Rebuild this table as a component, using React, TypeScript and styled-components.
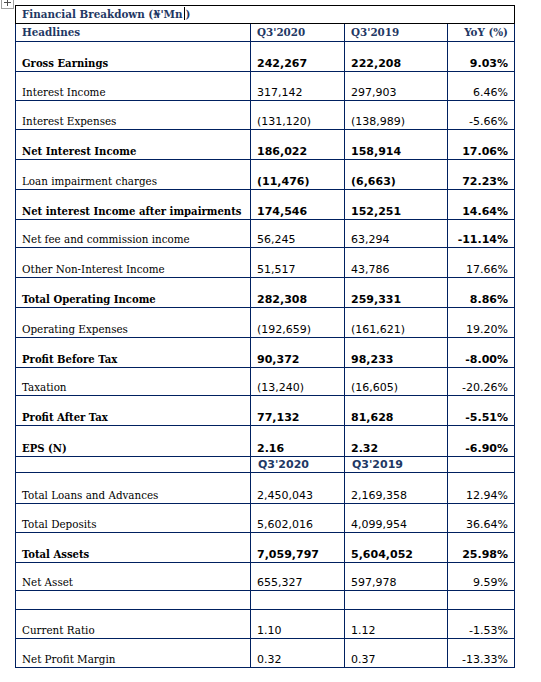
import styled, { createGlobalStyle } from 'styled-components';

const GlobalStyle = createGlobalStyle`
    html, body {
        margin: 0;
        padding: 0;
        background: #ffffff;
    }
    body {
        padding: 5px 0 0 15px;
    }
`;

const NAVY = '#002060';
const INK = '#1f3864';
const SERIF = `"DejaVu Serif Condensed", "DejaVu Serif", serif`;
const SANS = `"DejaVu Sans", "Liberation Sans", sans-serif`;

type Row = {
    label: string;
    q20: string;
    q19: string;
    yoy: string;
    lb?: boolean;
    vb?: boolean;
    yb?: boolean;
    h: number;
};

const topRows: Row[] = [
    { label: 'Gross Earnings', q20: '242,267', q19: '222,208', yoy: '9.03%', lb: true, vb: true, yb: true, h: 30 },
    { label: 'Interest Income', q20: '317,142', q19: '297,903', yoy: '6.46%', h: 29 },
    { label: 'Interest Expenses', q20: '(131,120)', q19: '(138,989)', yoy: '-5.66%', h: 29 },
    { label: 'Net Interest Income', q20: '186,022', q19: '158,914', yoy: '17.06%', lb: true, vb: true, yb: true, h: 30 },
    { label: 'Loan impairment charges', q20: '(11,476)', q19: '(6,663)', yoy: '72.23%', vb: true, yb: true, h: 30 },
    { label: 'Net interest Income after impairments', q20: '174,546', q19: '152,251', yoy: '14.64%', lb: true, vb: true, yb: true, h: 30 },
    { label: 'Net fee and commission income', q20: '56,245', q19: '63,294', yoy: '-11.14%', yb: true, h: 28 },
    { label: 'Other Non-Interest Income', q20: '51,517', q19: '43,786', yoy: '17.66%', h: 30 },
    { label: 'Total Operating Income', q20: '282,308', q19: '259,331', yoy: '8.86%', lb: true, vb: true, yb: true, h: 30 },
    { label: 'Operating Expenses', q20: '(192,659)', q19: '(161,621)', yoy: '19.20%', h: 30 },
    { label: 'Profit Before Tax', q20: '90,372', q19: '98,233', yoy: '-8.00%', lb: true, vb: true, yb: true, h: 30 },
    { label: 'Taxation', q20: '(13,240)', q19: '(16,605)', yoy: '-20.26%', h: 28 },
    { label: 'Profit After Tax', q20: '77,132', q19: '81,628', yoy: '-5.51%', lb: true, vb: true, yb: true, h: 30 },
    { label: 'EPS (N)', q20: '2.16', q19: '2.32', yoy: '-6.90%', lb: true, vb: true, yb: true, h: 31 },
];

const bottomRows: Row[] = [
    { label: 'Total Loans and Advances', q20: '2,450,043', q19: '2,169,358', yoy: '12.94%', h: 31 },
    { label: 'Total Deposits', q20: '5,602,016', q19: '4,099,954', yoy: '36.64%', h: 29 },
    { label: 'Total Assets', q20: '7,059,797', q19: '5,604,052', yoy: '25.98%', lb: true, vb: true, yb: true, h: 30 },
    { label: 'Net Asset', q20: '655,327', q19: '597,978', yoy: '9.59%', h: 28 },
];

const ratioRows: Row[] = [
    { label: 'Current Ratio', q20: '1.10', q19: '1.12', yoy: '-1.53%', h: 29 },
    { label: 'Net Profit Margin', q20: '0.32', q19: '0.37', yoy: '-13.33%', h: 29 },
];

function DataRow({ row }: { row: Row }) {
    return (
        <tr style={{ height: row.h }}>
            <LabelCell $bold={row.lb}>{row.label}</LabelCell>
            <NumCell $bold={row.vb}>{row.q20}</NumCell>
            <NumCell $bold={row.vb}>{row.q19}</NumCell>
            <NumCell $bold={row.yb} $right>{row.yoy}</NumCell>
        </tr>
    );
}

export default function App() {
    return (
        <>
            <GlobalStyle />
            <Page>
                <MoveHandle />
                <Sheet>
                    <colgroup>
                        <col style={{ width: 235 }} />
                        <col style={{ width: 94 }} />
                        <col style={{ width: 103 }} />
                        <col style={{ width: 67 }} />
                    </colgroup>
                    <tbody>
                        <tr style={{ height: 18 }}>
                            <TitleCell colSpan={4}>
                                Financial Breakdown (₦'Mn<Caret />)
                            </TitleCell>
                        </tr>
                        <tr style={{ height: 18 }}>
                            <HeadCell>Headlines</HeadCell>
                            <HeadCell>Q3'2020</HeadCell>
                            <HeadCell>Q3'2019</HeadCell>
                            <HeadCell $right>YoY (%)</HeadCell>
                        </tr>
                        {topRows.map(r => <DataRow key={r.label} row={r} />)}
                        <tr style={{ height: 16 }}>
                            <SubHeadCell />
                            <SubHeadCell>Q3'2020</SubHeadCell>
                            <SubHeadCell>Q3'2019</SubHeadCell>
                            <SubHeadCell />
                        </tr>
                        {bottomRows.map(r => <DataRow key={r.label} row={r} />)}
                        <tr style={{ height: 19 }}>
                            <LabelCell />
                            <NumCell />
                            <NumCell />
                            <NumCell />
                        </tr>
                        {ratioRows.map(r => <DataRow key={r.label} row={r} />)}
                    </tbody>
                </Sheet>
                <ResizeHandle />
            </Page>
        </>
    );
}

const Page = styled.div`
    position: relative;
    width: 500px;
`;

// Word's table move handle, half hidden above the page
const MoveHandle = styled.div`
    position: absolute;
    left: -14px;
    top: -9px;
    width: 11px;
    height: 11px;
    border: 1px solid #a0a0a0;
    background: #ffffff;

    &::before,
    &::after {
        content: '';
        position: absolute;
        background: #505050;
    }
    &::before {
        left: 5px;
        top: 2px;
        width: 1px;
        height: 7px;
    }
    &::after {
        left: 2px;
        top: 5px;
        width: 7px;
        height: 1px;
    }
`;

const ResizeHandle = styled.div`
    position: absolute;
    right: -9px;
    bottom: -9px;
    width: 6px;
    height: 6px;
    border: 1px solid #a0a0a0;
    background: #ffffff;
`;

const Sheet = styled.table`
    border-collapse: collapse;
    table-layout: fixed;
    width: 500px;
    border: 1px solid #000000;
`;

const Cell = styled.td`
    border: 1px solid ${NAVY};
    padding: 0 6px 1px 6px;
    vertical-align: bottom;
    white-space: nowrap;
    color: #000000;
`;

const LabelCell = styled(Cell)<{ $bold?: boolean }>`
    font-family: ${SERIF};
    font-size: ${p => (p.$bold ? '11.2px' : '11.5px')};
    font-weight: ${p => (p.$bold ? 700 : 400)};
    padding-left: 6px;
`;

const NumCell = styled(Cell)<{ $bold?: boolean; $right?: boolean }>`
    font-family: ${SANS};
    font-size: 11px;
    font-weight: ${p => (p.$bold ? 700 : 400)};
    text-align: ${p => (p.$right ? 'right' : 'left')};
`;

const TitleCell = styled(Cell)`
    font-family: ${SERIF};
    font-size: 11.5px;
    font-weight: 700;
    color: ${INK};
    vertical-align: middle;
    border-color: #000000;
`;

const HeadCell = styled(Cell)<{ $right?: boolean }>`
    font-family: ${SERIF};
    font-size: 11.5px;
    font-weight: 700;
    color: ${INK};
    vertical-align: middle;
    text-align: ${p => (p.$right ? 'right' : 'left')};
`;

const SubHeadCell = styled(Cell)`
    font-family: ${SANS};
    font-size: 11px;
    font-weight: 700;
    color: ${INK};
    vertical-align: middle;
    padding-left: 7px;
`;

const Caret = styled.span`
    display: inline-block;
    width: 1px;
    height: 13px;
    margin: 0 1px -2px 1px;
    background: #000000;
`;
